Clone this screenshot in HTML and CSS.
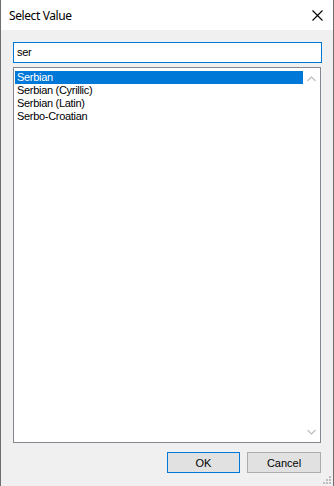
FILE: index.html
```html
<!DOCTYPE html>
<html lang="en">
<head>
  <meta charset="UTF-8">
  <title>Select Value</title>
  <link rel="stylesheet" href="styles.css">
</head>
<body>
  <div class="window">
    <div class="titlebar">
      <span class="title">Select Value</span>
      <svg class="close" width="11" height="11" viewBox="0 0 11 11">
        <path d="M0.5 0.5 L10.5 10.5 M10.5 0.5 L0.5 10.5" stroke="#000" stroke-width="1.1" fill="none"/>
      </svg>
    </div>

    <div class="content">
      <div class="search">ser</div>

      <div class="listbox">
        <ul class="items">
          <li class="selected">Serbian</li>
          <li>Serbian (Cyrillic)</li>
          <li>Serbian (Latin)</li>
          <li>Serbo-Croatian</li>
        </ul>
        <div class="scrollbar">
          <div class="arrow">
            <svg width="9" height="6" viewBox="0 0 9 6"><path d="M0.5 5 L4.5 1 L8.5 5" stroke="#c2c2c2" stroke-width="1.3" fill="none"/></svg>
          </div>
          <div class="track"></div>
          <div class="arrow">
            <svg width="9" height="6" viewBox="0 0 9 6"><path d="M0.5 1 L4.5 5 L8.5 1" stroke="#c2c2c2" stroke-width="1.3" fill="none"/></svg>
          </div>
        </div>
      </div>

      <div class="buttons">
        <button class="btn default">OK</button>
        <button class="btn">Cancel</button>
      </div>
    </div>

    <svg class="grip" width="9" height="9" viewBox="0 0 9 9">
      <rect x="7" y="1" width="2" height="2" fill="#bdbdbd"/>
      <rect x="4" y="4" width="2" height="2" fill="#bdbdbd"/>
      <rect x="7" y="4" width="2" height="2" fill="#bdbdbd"/>
      <rect x="1" y="7" width="2" height="2" fill="#bdbdbd"/>
      <rect x="4" y="7" width="2" height="2" fill="#bdbdbd"/>
      <rect x="7" y="7" width="2" height="2" fill="#bdbdbd"/>
    </svg>
  </div>
</body>
</html>
```

FILE: styles.css
```css
* {
  box-sizing: border-box;
}
body {
  margin: 0;
  font-family: "Liberation Sans", Arial, sans-serif;
  background: #f0f0f0;
}
.window {
  position: relative;
  width: 334px;
  height: 486px;
  display: flex;
  flex-direction: column;
  border-left: 1px solid #6e6e6e;
  border-right: 1px solid #6e6e6e;
  background: #f0f0f0;
}
.titlebar {
  height: 31px;
  background: #fff;
  display: flex;
  align-items: center;
  justify-content: space-between;
  padding: 0 10px 0 8px;
}
.title {
  font-family: "Noto Sans", "Open Sans", sans-serif;
  font-size: 12px;
  letter-spacing: -0.4px;
  color: #000;
}
.search {
  height: 21px;
  border: 1px solid #0078d7;
  background: #fff;
  font-size: 11px;
  letter-spacing: -0.3px;
  line-height: 19px;
  padding-left: 3px;
  color: #000;
}
.content {
  flex: 1;
  display: flex;
  flex-direction: column;
  padding: 12px 11px 13px 12px;
}
.listbox {
  margin-top: 4px;
  margin-right: 1px;
  height: 376px;
  border: 1px solid #828790;
  background: #fff;
  display: flex;
}
.items {
  flex: 1;
  list-style: none;
  margin: 0;
  padding: 3px 0 0 1px;
  font-size: 11px;
  letter-spacing: -0.3px;
}
.items li {
  height: 13px;
  line-height: 13px;
  padding-left: 2px;
  color: #000;
}
.items li.selected {
  background: #0078d7;
  color: #fff;
}
.scrollbar {
  width: 17px;
  display: flex;
  flex-direction: column;
  background: #fff;
}
.arrow {
  height: 17px;
  display: flex;
  align-items: center;
  justify-content: center;
  padding-top: 4px;
}
.arrow:last-child {
  padding-top: 0;
  padding-bottom: 4px;
}
.track {
  flex: 1;
}
.buttons {
  margin-top: 9px;
  display: flex;
  justify-content: flex-end;
  gap: 7px;
  padding-right: 1px;
}
.btn {
  height: 21px;
  width: 73px;
  border: 1px solid #adadad;
  background: #e1e1e1;
  font-family: "Liberation Sans", Arial, sans-serif;
  font-size: 11px;
  color: #000;
  padding: 0;
}
.btn.default {
  border-color: #0078d7;
}
.btn + .btn {
  width: 74px;
}
.grip {
  position: absolute;
  right: 2px;
  bottom: 2px;
}
```
